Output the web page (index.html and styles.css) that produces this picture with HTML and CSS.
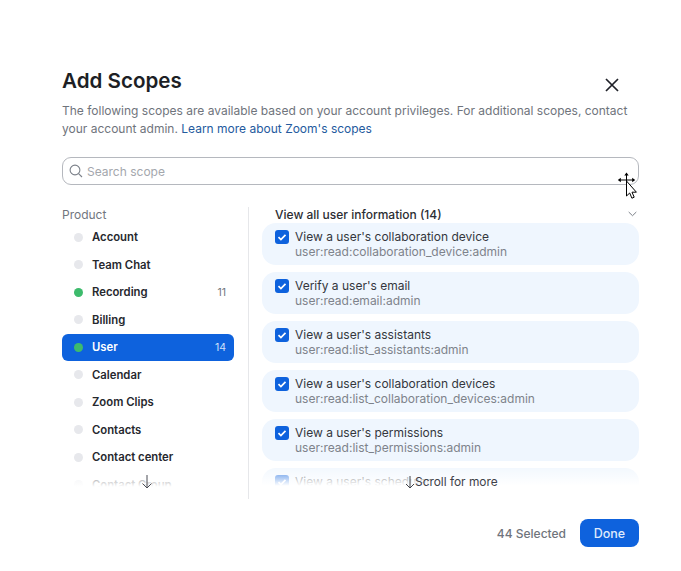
FILE: index.html
```html
<!DOCTYPE html>
<html lang="en">
<head>
<meta charset="utf-8">
<title>Add Scopes</title>
<link rel="stylesheet" href="styles.css">
</head>
<body>
<main class="dialog">
  <header class="head">
    <h1 class="title">Add Scopes</h1>
    <button class="close" aria-label="Close">
      <svg width="14" height="14" viewBox="0 0 14 14"><path d="M1 1l12 12M13 1L1 13" fill="none" stroke="#1f2128" stroke-width="1.7"/></svg>
    </button>
  </header>
  <p class="desc">The following scopes are available based on your account privileges. For additional scopes, contact your account admin. <a class="link">Learn more about Zoom's scopes</a></p>
  <div class="search">
    <svg width="14" height="14" viewBox="0 0 14 14"><circle cx="6" cy="6" r="4.9" fill="none" stroke="#7b8089" stroke-width="1.1"/><path d="M9.6 9.6l3.4 3.4" stroke="#7b8089" stroke-width="1.1"/></svg>
    <span>Search scope</span>
  </div>
  <div class="columns">
    <aside class="side">
      <div class="side-label">Product</div>
      <ul class="products">
        <li class="product"><i class="dot"></i><span class="name">Account</span></li>
        <li class="product"><i class="dot"></i><span class="name">Team Chat</span></li>
        <li class="product"><i class="dot on"></i><span class="name">Recording</span><span class="count">11</span></li>
        <li class="product"><i class="dot"></i><span class="name">Billing</span></li>
        <li class="product active"><i class="dot on"></i><span class="name">User</span><span class="count">14</span></li>
        <li class="product"><i class="dot"></i><span class="name">Calendar</span></li>
        <li class="product"><i class="dot"></i><span class="name">Zoom Clips</span></li>
        <li class="product"><i class="dot"></i><span class="name">Contacts</span></li>
        <li class="product"><i class="dot"></i><span class="name">Contact center</span></li>
        <li class="product"><i class="dot"></i><span class="name">Contact Group</span></li>
      </ul>
      <svg class="arrow arrow-left" width="12" height="14" viewBox="0 0 12 14"><path d="M6 0v13M1.5 8.500L6 13l4.500-4.500" fill="none" stroke="#4a4d55" stroke-width="1"/></svg>
    </aside>
    <section class="main">
      <div class="group">
        <span>View all user information (14)</span>
        <svg width="9" height="6" viewBox="0 0 9 6"><path d="M.7 1l3.800 3.700L8.300 1" fill="none" stroke="#7b8089" stroke-width="1"/></svg>
      </div>
      <ul class="scopes">
        <li class="scope"><svg class="check" viewBox="0 0 14 14"><rect width="14" height="14" rx="3" fill="#0e62dd"/><path d="M3.500 7.200l2.400 2.300 4.600-4.700" fill="none" stroke="#fff" stroke-width="1.700"/></svg><div><div class="scope-title">View a user's collaboration device</div><div class="scope-id">user:read:collaboration_device:admin</div></div></li>
        <li class="scope"><svg class="check" viewBox="0 0 14 14"><rect width="14" height="14" rx="3" fill="#0e62dd"/><path d="M3.500 7.200l2.400 2.300 4.600-4.700" fill="none" stroke="#fff" stroke-width="1.700"/></svg><div><div class="scope-title">Verify a user's email</div><div class="scope-id">user:read:email:admin</div></div></li>
        <li class="scope"><svg class="check" viewBox="0 0 14 14"><rect width="14" height="14" rx="3" fill="#0e62dd"/><path d="M3.500 7.200l2.400 2.300 4.600-4.700" fill="none" stroke="#fff" stroke-width="1.700"/></svg><div><div class="scope-title">View a user's assistants</div><div class="scope-id">user:read:list_assistants:admin</div></div></li>
        <li class="scope"><svg class="check" viewBox="0 0 14 14"><rect width="14" height="14" rx="3" fill="#0e62dd"/><path d="M3.500 7.200l2.400 2.300 4.600-4.700" fill="none" stroke="#fff" stroke-width="1.700"/></svg><div><div class="scope-title">View a user's collaboration devices</div><div class="scope-id">user:read:list_collaboration_devices:admin</div></div></li>
        <li class="scope"><svg class="check" viewBox="0 0 14 14"><rect width="14" height="14" rx="3" fill="#0e62dd"/><path d="M3.500 7.200l2.400 2.300 4.600-4.700" fill="none" stroke="#fff" stroke-width="1.700"/></svg><div><div class="scope-title">View a user's permissions</div><div class="scope-id">user:read:list_permissions:admin</div></div></li>
        <li class="scope"><svg class="check" viewBox="0 0 14 14"><rect width="14" height="14" rx="3" fill="#0e62dd"/><path d="M3.500 7.200l2.400 2.300 4.600-4.700" fill="none" stroke="#fff" stroke-width="1.700"/></svg><div><div class="scope-title">View a user's scheduler</div><div class="scope-id">user:read:list_schedulers:admin</div></div></li>
      </ul>
      <div class="more"><svg width="10" height="13" viewBox="0 0 10 13"><path d="M5 0v12M1 8l4 4 4-4" fill="none" stroke="#3f424a" stroke-width="1"/></svg><span>Scroll for more</span></div>
    </section>
  </div>
  <footer class="foot">
    <span class="selected">44 Selected</span>
    <button class="done">Done</button>
  </footer>
</main>
<svg class="cursor" width="22" height="30" viewBox="0 0 22 30">
  <path d="M9.500 3v11M3 8h13" fill="none" stroke="#000" stroke-width="1"/>
  <path d="M9.500 .5l2.200 3h-4.400zM.8 8l3-2.200v4.400zM18.200 8l-3-2.200v4.400z" fill="#000"/>
  <path d="M9.500 9v15l3.200-3 2.200 5.200 2.300-1-2.200-5h4.400z" fill="#fff" stroke="#000" stroke-width="1"/>
</svg>
</body>
</html>
```
FILE: styles.css
```css
* { box-sizing: border-box; }
html, body { margin: 0; height: 100%; background: #fff; }
body { font-family: Inter, "Liberation Sans", sans-serif; color: #23252b; overflow: hidden; position: relative; }
ul { list-style: none; margin: 0; padding: 0; }
.dialog { width: 577px; margin-left: 62px; padding-top: 68px; }
.head { display: flex; justify-content: space-between; align-items: center; height: 26px; }
.title { margin: 0; font-size: 20.600px; line-height: 26px; font-weight: 600; color: #1d1f25; }
.close { border: 0; background: none; padding: 0; margin: 8px 20px 0 0; width: 14px; height: 14px; display: flex; }
.desc { margin: 8px 0 0; font-size: 12px; line-height: 17.500px; color: #6f747c; }
.link { color: #245a9e; }
.search { margin-top: 20px; height: 28px; border: 1.500px solid #b5b8be; border-radius: 9px; display: flex; align-items: center; gap: 4px; padding-left: 6px; font-size: 12px; color: #a4a7ad; }
.columns { display: flex; height: 292px; margin-top: 22px; }
.side { width: 187px; border-right: 1px solid #e6e7ea; padding-right: 14px; position: relative; height: 292px; }
.side-label { font-size: 12px; line-height: 16px; color: #71767e; }
.products { height: 267.500px; overflow: hidden; position: relative; margin-top: .5px; }
.products::after, .scopes::after { content: ""; position: absolute; left: 0; right: 0; bottom: 0; height: 28px; background: linear-gradient(rgba(255,255,255,0), #fff 85%); }
.product { display: flex; align-items: center; height: 27.500px; padding: 0 8px 0 12px; border-radius: 6px; font-size: 11.300px; font-weight: 600; color: #26282e; }
.dot { width: 9px; height: 9px; border-radius: 50%; background: #e7e8ec; margin-right: 9px; flex: none; }
.dot.on { background: #3dbb6c; }
.name { flex: 1; }
.count { font-size: 10.500px; font-weight: 400; color: #71767e; }
.active { background: #0e62dd; color: #fff; }
.active .count { color: #cfe0fa; }
.arrow-left { position: absolute; left: 79px; top: 268px; }
.main { flex: 1; padding-left: 13px; position: relative; height: 292px; }
.group { display: flex; justify-content: space-between; align-items: center; height: 14px; margin-bottom: 2px; padding-left: 13px; padding-right: 2px; font-size: 12px; font-weight: 500; color: #2b2d33; }
.scopes { height: 267px; overflow: hidden; display: flex; flex-direction: column; gap: 7px; position: relative; }
.scope { flex: none; height: 42px; background: #eff6fe; border-radius: 14px; display: flex; gap: 6px; padding: 6px 13px; }
.check { width: 14px; height: 14px; flex: none; margin-top: 1px; }
.scope-title { font-size: 12px; line-height: 15px; color: #34363d; }
.scope-id { font-size: 12px; line-height: 15px; color: #7e838b; }
.more { position: absolute; left: 156px; top: 267px; display: flex; align-items: center; gap: 0; font-size: 11.900px; line-height: 16px; color: #3f424a; }
.foot { display: flex; justify-content: flex-end; align-items: center; gap: 14px; margin-top: 20px; }
.selected { font-size: 12px; font-weight: 500; color: #6f747c; }
.done { width: 59px; height: 28px; border: 0; border-radius: 8px; background: #0e62dd; color: #dfeafc; font: 500 12.500px Inter, "Liberation Sans", sans-serif; }
.cursor { position: absolute; left: 617px; top: 172px; }
```
